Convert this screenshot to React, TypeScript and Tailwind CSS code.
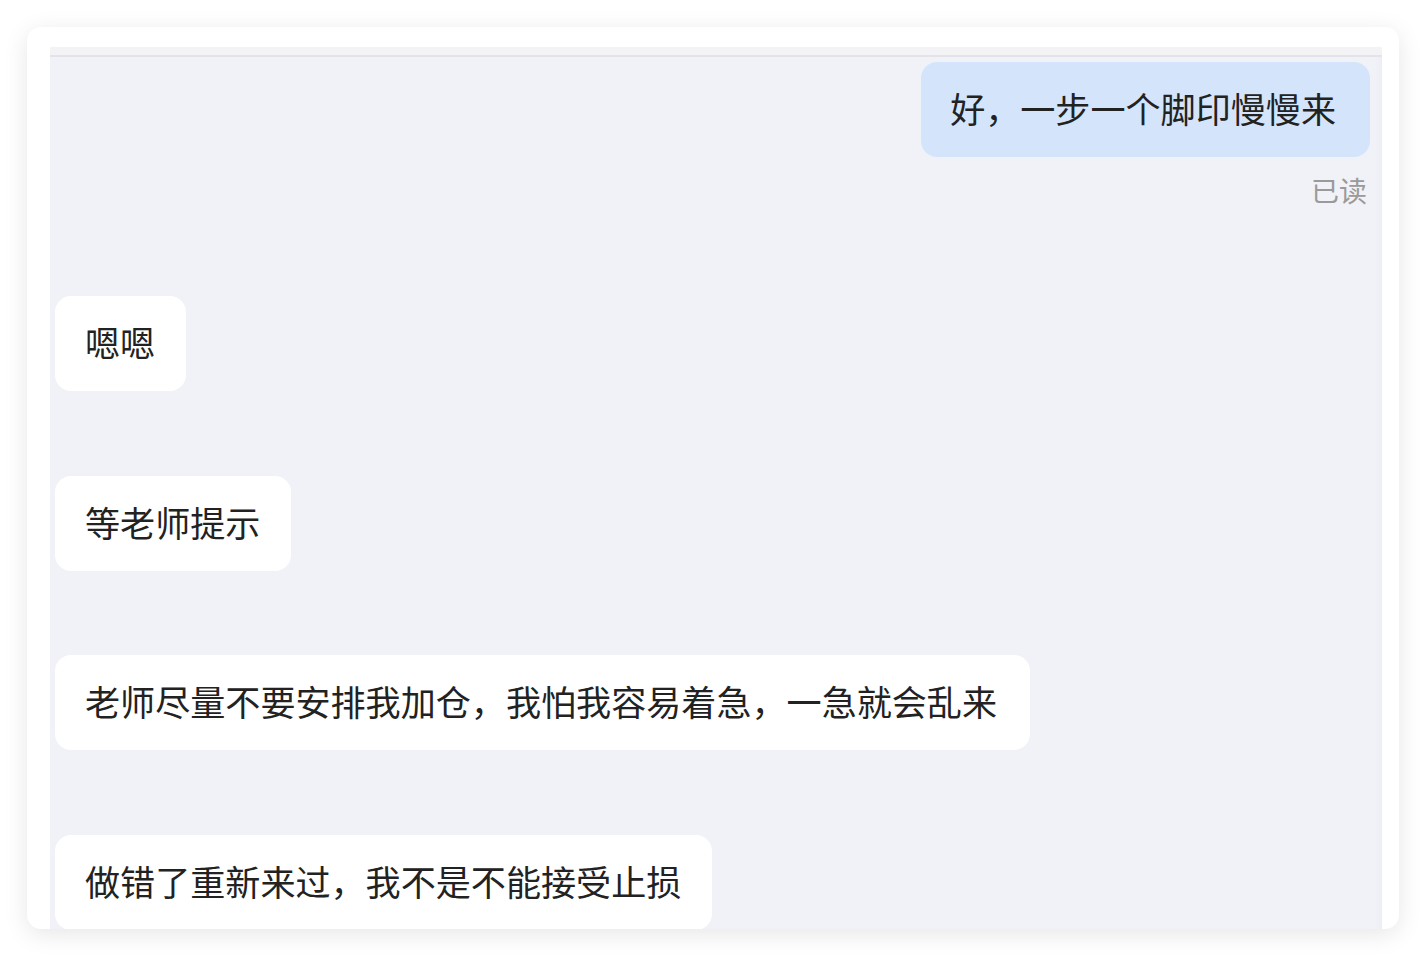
import React from "react";

const font = { fontFamily: '"Noto Sans CJK SC", "Noto Sans", sans-serif' };

function Left({ text, className = "" }: { text: string; className?: string }) {
  return (
    <div className={`self-start rounded-[16px] bg-white pt-[28px] pb-[32px] pl-[30px] pr-[31px] text-[35.1px] leading-[35px] text-[#222222] ${className}`}>
      {text}
    </div>
  );
}

export default function App() {
  return (
    <div className="min-h-[956px] w-[1426px] bg-white pt-[27px] pl-[27px]" style={font}>
      <div className="flex h-[902px] w-[1372px] flex-col overflow-hidden rounded-[14px] bg-white pt-[20px] pl-[23px] pr-[17px] shadow-[0_5px_24px_rgba(0,0,0,0.1)]">
        <div className="flex flex-1 flex-col bg-[#f1f2f7] shadow-[inset_-6px_0_8px_-6px_rgba(0,0,0,0.04)]">
          <div className="h-[8px] bg-[#f3f3f6]" />
          <div className="h-[2px] bg-[#e3e4ea]" />
          <div className="flex flex-col px-[5px] pt-[5px]">
            <div className="mr-[7px] self-end rounded-[16px] bg-[#d4e5fb] pt-[28px] pb-[32px] pl-[29px] pr-[34px] text-[35.1px] leading-[35px] text-[#222222]">
              好，一步一个脚印慢慢来
            </div>
            <div className="mt-[18px] mr-[10px] self-end text-[28px] leading-[30px] text-[#9a9a9a]">已读</div>
            <Left text="嗯嗯" className="mt-[91px]" />
            <Left text="等老师提示" className="mt-[85px]" />
            <Left text="老师尽量不要安排我加仓，我怕我容易着急，一急就会乱来" className="mt-[84px] pr-[33px]" />
            <Left text="做错了重新来过，我不是不能接受止损" className="mt-[85px]" />
          </div>
        </div>
      </div>
    </div>
  );
}
